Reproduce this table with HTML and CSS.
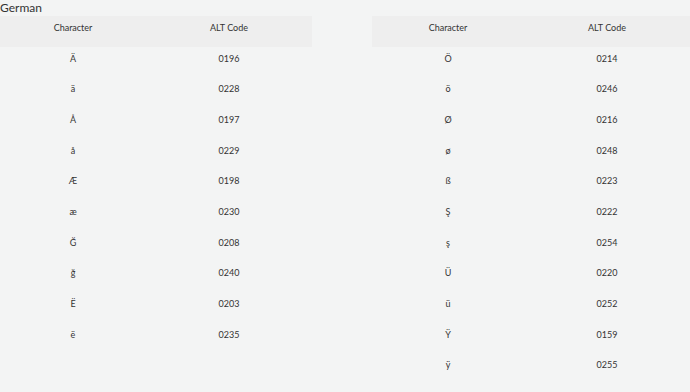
FILE: index.html
```html
<!DOCTYPE html>
<html lang="en">
<head>
<meta charset="utf-8">
<title>German ALT Codes</title>
<link rel="stylesheet" href="styles.css">
</head>
<body>
<h2 class="title">German</h2>
<div class="tables">
  <table class="codes codes-left">
    <thead><tr><th class="c1">Character</th><th class="c2">ALT Code</th></tr></thead>
    <tbody>
      <tr><td>Ä</td><td>0196</td></tr>
      <tr><td>ä</td><td>0228</td></tr>
      <tr><td>Å</td><td>0197</td></tr>
      <tr><td>å</td><td>0229</td></tr>
      <tr><td>Æ</td><td>0198</td></tr>
      <tr><td>æ</td><td>0230</td></tr>
      <tr><td>Ğ</td><td>0208</td></tr>
      <tr><td>ğ</td><td>0240</td></tr>
      <tr><td>Ë</td><td>0203</td></tr>
      <tr><td>ë</td><td>0235</td></tr>
    </tbody>
  </table>
  <table class="codes codes-right">
    <thead><tr><th class="c1">Character</th><th class="c2">ALT Code</th></tr></thead>
    <tbody>
      <tr><td>Ö</td><td>0214</td></tr>
      <tr><td>ö</td><td>0246</td></tr>
      <tr><td>Ø</td><td>0216</td></tr>
      <tr><td>ø</td><td>0248</td></tr>
      <tr><td>ß</td><td>0223</td></tr>
      <tr><td>Ş</td><td>0222</td></tr>
      <tr><td>ş</td><td>0254</td></tr>
      <tr><td>Ü</td><td>0220</td></tr>
      <tr><td>ü</td><td>0252</td></tr>
      <tr><td>Ÿ</td><td>0159</td></tr>
      <tr><td>ÿ</td><td>0255</td></tr>
    </tbody>
  </table>
</div>
</body>
</html>
```
FILE: styles.css
```css
html, body {
  margin: 0;
  padding: 0;
  background: #f3f4f4;
}
body {
  font-family: Lato, "Open Sans", sans-serif;
  color: #333;
  overflow: hidden;
}
.title {
  margin: 0;
  font-size: 12px;
  font-weight: 400;
  line-height: 16px;
  height: 16px;
  color: #333;
}
.tables {
  display: flex;
  gap: 60px;
  align-items: flex-start;
}
.codes {
  border-collapse: collapse;
  table-layout: fixed;
  flex: none;
}
.codes-left { width: 312px; }
.codes-right { width: 318px; }
.codes-left .c1 { width: 146px; }
.codes-right .c1 { width: 152px; }
.codes th, .codes td {
  font-size: 9px;
  line-height: 14px;
  font-weight: 400;
  text-align: center;
  padding: 5px 0 11.67px;
  color: #333;
}
.codes thead tr {
  background: #eeeeee;
}
```
